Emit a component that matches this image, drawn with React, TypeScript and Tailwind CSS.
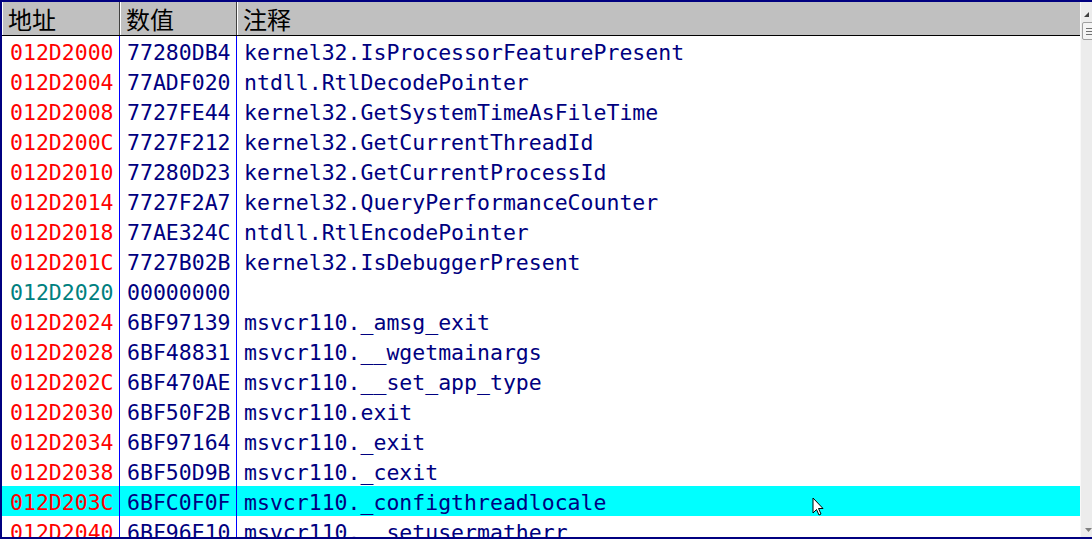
import React from 'react'

type Row = { addr: string; value: string; comment: string; zero?: boolean; selected?: boolean }

const rows: Row[] = [
  { addr: '012D2000', value: '77280DB4', comment: 'kernel32.IsProcessorFeaturePresent' },
  { addr: '012D2004', value: '77ADF020', comment: 'ntdll.RtlDecodePointer' },
  { addr: '012D2008', value: '7727FE44', comment: 'kernel32.GetSystemTimeAsFileTime' },
  { addr: '012D200C', value: '7727F212', comment: 'kernel32.GetCurrentThreadId' },
  { addr: '012D2010', value: '77280D23', comment: 'kernel32.GetCurrentProcessId' },
  { addr: '012D2014', value: '7727F2A7', comment: 'kernel32.QueryPerformanceCounter' },
  { addr: '012D2018', value: '77AE324C', comment: 'ntdll.RtlEncodePointer' },
  { addr: '012D201C', value: '7727B02B', comment: 'kernel32.IsDebuggerPresent' },
  { addr: '012D2020', value: '00000000', comment: '', zero: true },
  { addr: '012D2024', value: '6BF97139', comment: 'msvcr110._amsg_exit' },
  { addr: '012D2028', value: '6BF48831', comment: 'msvcr110.__wgetmainargs' },
  { addr: '012D202C', value: '6BF470AE', comment: 'msvcr110.__set_app_type' },
  { addr: '012D2030', value: '6BF50F2B', comment: 'msvcr110.exit' },
  { addr: '012D2034', value: '6BF97164', comment: 'msvcr110._exit' },
  { addr: '012D2038', value: '6BF50D9B', comment: 'msvcr110._cexit' },
  { addr: '012D203C', value: '6BFC0F0F', comment: 'msvcr110._configthreadlocale', selected: true },
  { addr: '012D2040', value: '6BF96E10', comment: 'msvcr110.__setusermatherr' },
]

const mono = "font-['DejaVu_Sans_Mono','Liberation_Mono',monospace] text-[21.5px]"

export default function App() {
  return (
    <div className="relative w-[1092px] h-[539px] overflow-hidden bg-white border-t-2 border-l-2 border-b-2 border-[#000080] flex">
      {/* Table */}
      <div className="flex-1 flex flex-col min-w-0">
        {/* Header */}
        <div className="h-[34px] shrink-0 flex bg-[#c0c0c0] border-b border-black font-['Noto_Sans_CJK_SC',sans-serif] text-[24px] text-black leading-[33px]">
          <div className="w-[118px] shrink-0 border-l border-white border-r border-r-[#404040] pl-[5px]">地址</div>
          <div className="w-[117px] shrink-0 border-l border-white border-r border-r-[#404040] pl-[5px]">数值</div>
          <div className="flex-1 border-l border-white pl-[5px]">注释</div>
        </div>

        {/* Body */}
        <div className={`flex-1 flex flex-col ${mono} leading-[30px]`}>
          {rows.map((r) => (
            <div key={r.addr} className={`h-[30px] shrink-0 flex ${r.selected ? 'bg-[#00ffff]' : ''}`}>
              <div className={`w-[118px] shrink-0 border-r border-[#0000ff] pl-[8px] pt-[2px] ${r.zero ? 'text-[#008080]' : 'text-[#ff0000]'}`}>
                {r.addr}
              </div>
              <div className="w-[117px] shrink-0 border-r border-[#0000ff] pl-[7px] pt-[2px] text-[#000080]">{r.value}</div>
              <div className="flex-1 pl-[7px] pt-[2px] text-[#000080] whitespace-pre">{r.comment}</div>
            </div>
          ))}
          <div className="flex-1 flex">
            <div className="w-[118px] shrink-0 border-r border-[#0000ff]" />
            <div className="w-[117px] shrink-0 border-r border-[#0000ff]" />
          </div>
        </div>
      </div>

      {/* Scrollbar */}
      <div className="w-[12px] shrink-0 bg-[#ececec] border-l border-[#f8f8f8] flex flex-col items-center">
        <svg width="12" height="20" viewBox="0 0 12 20" className="shrink-0">
          <path d="M3 15 L8 10 L8 15 Z" fill="#404040" />
        </svg>
        <div className="w-[12px] h-[18px] shrink-0 ml-[2px] rounded-[2px] border border-[#a0a0a0] bg-[#f4f4f4] flex flex-col justify-center gap-[2px] pl-[3px]">
          <div className="h-px w-[8px] bg-[#707070]" />
          <div className="h-px w-[8px] bg-[#707070]" />
          <div className="h-px w-[8px] bg-[#707070]" />
        </div>
        <div className="flex-1" />
        <svg width="12" height="14" viewBox="0 0 12 14" className="shrink-0">
          <path d="M4 5 L11 5 L7.5 9 Z" fill="#808080" />
        </svg>
      </div>

      {/* Mouse cursor */}
      <svg
        className="absolute left-[810px] top-[495px]"
        width="14"
        height="22"
        viewBox="0 0 14 22"
      >
        <path
          d="M1 1 L1 16 L4.5 12.5 L7 18 L9 17 L6.5 11.5 L11 11.5 Z"
          fill="#ffffff"
          stroke="#000000"
          strokeWidth="1"
          strokeLinejoin="round"
        />
      </svg>
    </div>
  )
}
